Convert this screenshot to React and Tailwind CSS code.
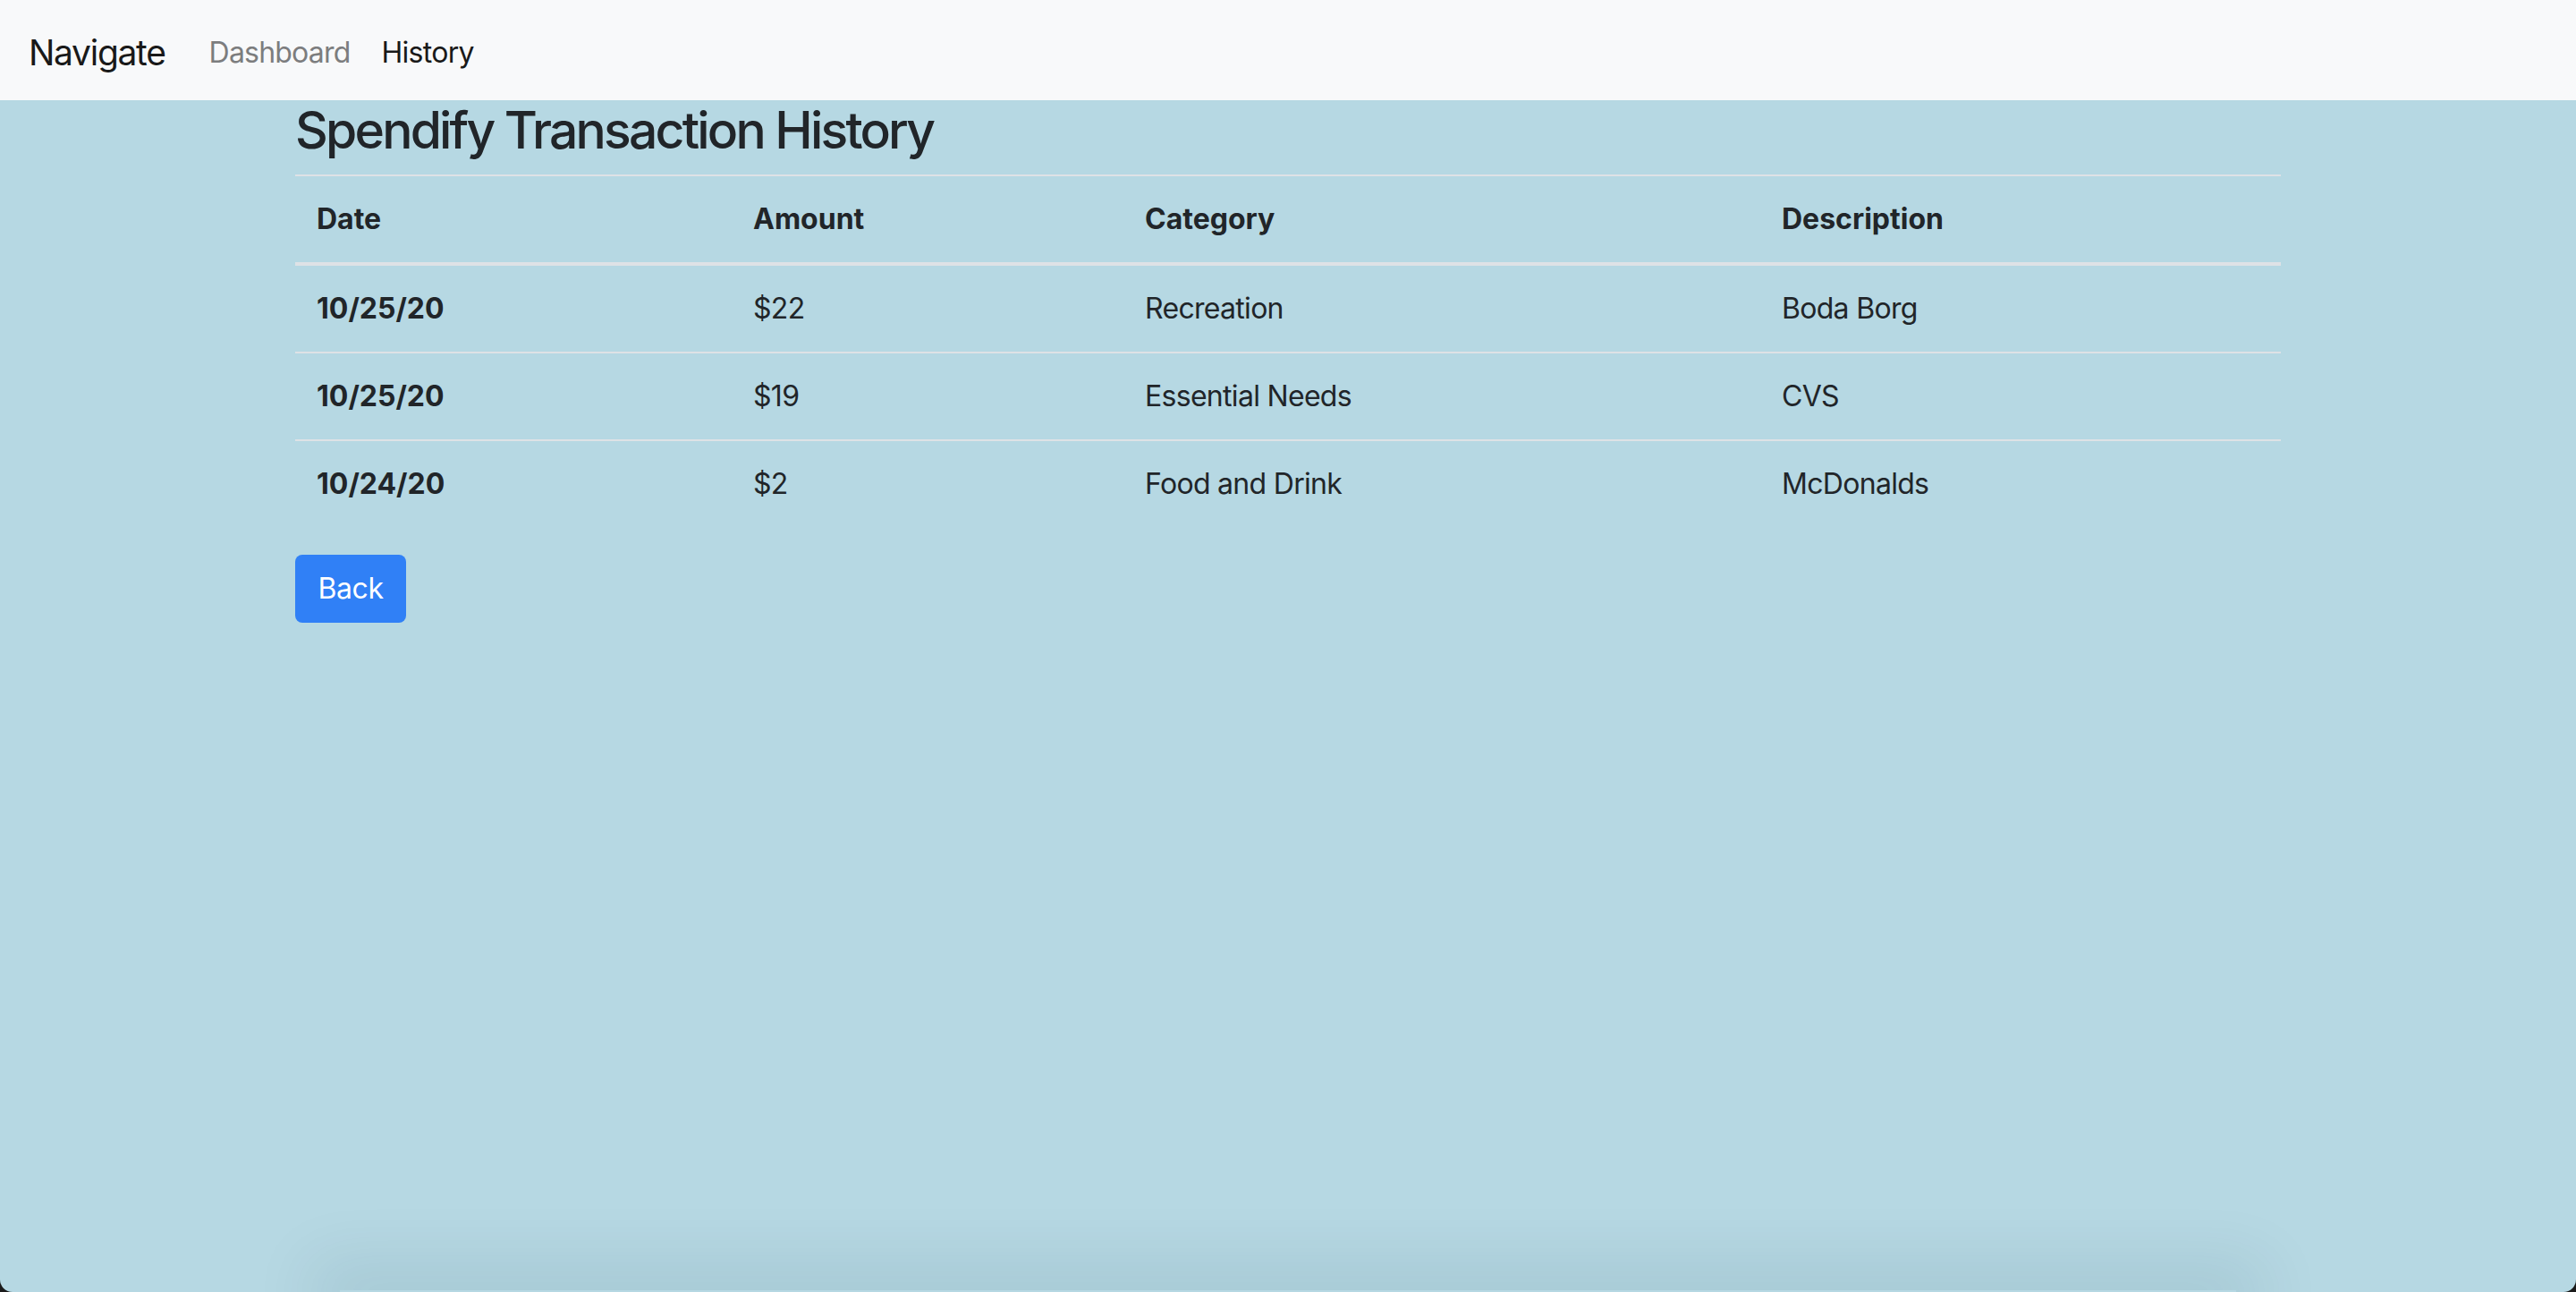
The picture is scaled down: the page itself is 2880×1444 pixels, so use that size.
import React from "react";

const transactions = [
  { date: "10/25/20", amount: "$22", category: "Recreation", description: "Boda Borg" },
  { date: "10/25/20", amount: "$19", category: "Essential Needs", description: "CVS" },
  { date: "10/24/20", amount: "$2", category: "Food and Drink", description: "McDonalds" },
];

const cols = "grid grid-cols-[488px_438px_712px_582px]";

const App = () => {
  return (
    <div className="h-[1444px] overflow-hidden bg-[#1b1b1b] font-['Inter','Liberation_Sans',sans-serif] text-[#212529]">
      <div className="flex h-full flex-col overflow-hidden rounded-b-[14px] bg-[#b6d8e3]">
        {/* navbar */}
        <nav className="flex h-[112px] shrink-0 items-center bg-[#f8f9fa] px-[32px] pt-[6px]">
          <span className="mr-[32px] text-[39px] leading-[60px] tracking-[-1.3px] text-[#191919]">Navigate</span>
          <a className="pl-[17px] pr-[19px] text-[32px] leading-[48px] tracking-[-0.8px] text-[#7c7d7e]">Dashboard</a>
          <a className="px-[16px] text-[32px] leading-[48px] tracking-[-0.7px] text-[#191919]">History</a>
        </nav>

        <main className="mx-auto w-[2220px]">
          <h2 className="mb-[15px] text-[57px] font-medium leading-[68px] tracking-[-2.8px]">
            Spendify Transaction History
          </h2>

          <div className="border-t-2 border-[#dee2e6] text-[32px] leading-[48px]">
            <div className={`${cols} border-b-4 border-[#dee2e6] font-bold`}>
              <div className="p-[24px]">Date</div>
              <div className="p-[24px]">Amount</div>
              <div className="p-[24px]">Category</div>
              <div className="p-[24px]">Description</div>
            </div>
            {transactions.map((t, i) => (
              <div
                key={i}
                className={`${cols} ${i > 0 ? "border-t-2 border-[#dee2e6]" : ""}`}
              >
                <div className="p-[24px] font-bold">{t.date}</div>
                <div className="p-[24px] tracking-[-0.7px]">{t.amount}</div>
                <div className="p-[24px] tracking-[-0.7px]">{t.category}</div>
                <div className="p-[24px] tracking-[-0.7px]">{t.description}</div>
              </div>
            ))}
          </div>

          <button className="mt-[31px] flex h-[76px] w-[124px] items-center justify-center rounded-[8px] bg-[#3080f6] text-[32px] leading-[48px] tracking-[-0.4px] text-white">
            Back
          </button>
        </main>

        {/* shadow of the card just below the fold */}
        <div className="mt-auto h-[2px] w-[2120px] shrink-0 self-center shadow-[0_0_70px_30px_rgba(0,50,70,0.1)]" />
      </div>
    </div>
  );
};

export default App;
